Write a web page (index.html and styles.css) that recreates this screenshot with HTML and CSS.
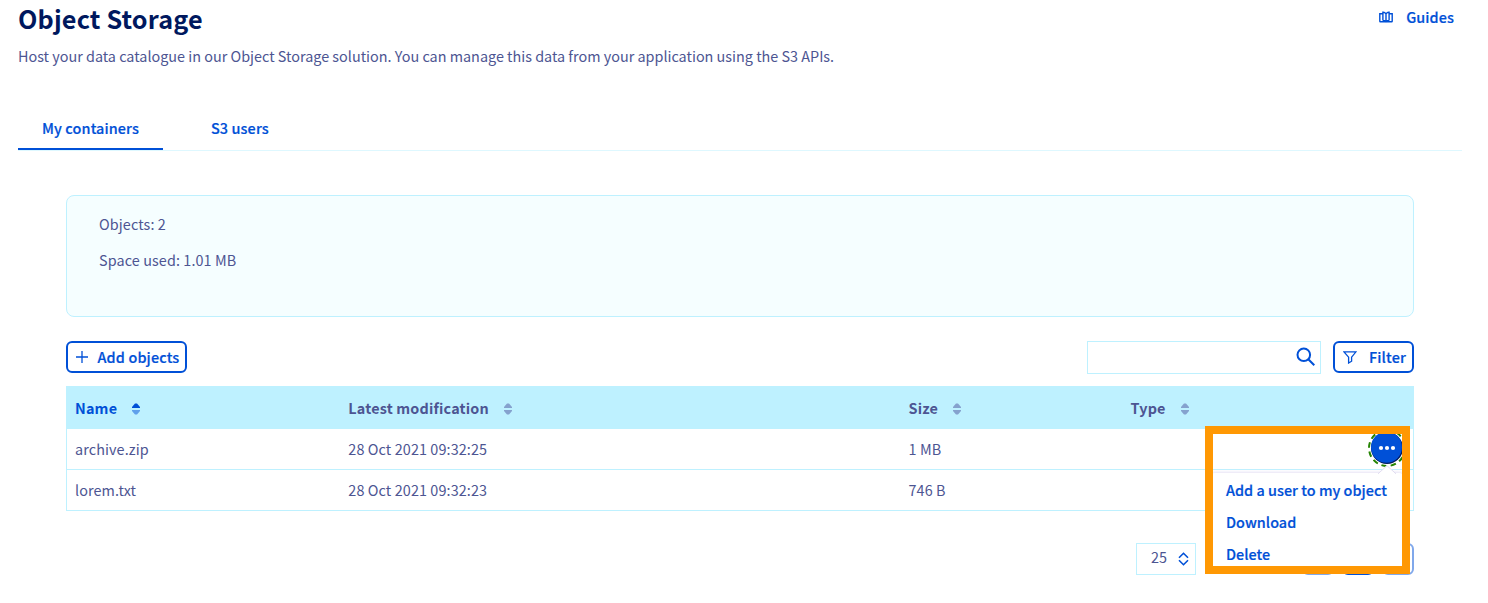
FILE: index.html
```html
<!DOCTYPE html>
<html lang="en">
<head>
<meta charset="utf-8">
<title>Object Storage</title>
<link rel="stylesheet" href="styles.css">
</head>
<body>
<main class="page">
  <header class="page-header">
    <h1 class="title">Object Storage</h1>
    <a class="guides">
      <svg width="14" height="12" viewBox="0 0 14 12" fill="none" stroke="currentColor" stroke-width="1.400"><path d="M3.500 2.700H.8v7.500q0 .5.500.5h11.400q.5 0 .5-.5V2.700h-2.700M3.900 9.500V1.200C5.500 1 6.300 1.800 7 3c.7-1.200 1.500-2 3.100-1.800v8.300M3.900 9.500q2 0 3.100 1.200 1.100-1.200 3.100-1.200M7 3v7.500"/></svg>
      <span>Guides</span>
    </a>
  </header>
  <p class="description">Host your data catalogue in our Object Storage solution. You can manage this data from your application using the S3 APIs.</p>
  <nav class="tabs">
    <a class="tab tab-active">My containers</a>
    <a class="tab">S3 users</a>
  </nav>
  <section class="content">
    <div class="summary">
      <p>Objects: 2</p>
      <p>Space used: 1.01 MB</p>
    </div>
    <div class="toolbar">
      <button class="btn btn-add">
        <svg width="12" height="12" viewBox="0 0 12 12" stroke="currentColor" stroke-width="1.300"><path d="M6 0v12M0 6h12"/></svg>
        <span>Add objects</span>
      </button>
      <div class="search">
        <svg width="20" height="20" viewBox="0 0 20 20" fill="none" stroke="currentColor" stroke-width="2"><circle cx="7.800" cy="7.800" r="6.300"/><path d="M12.300 12.300l6 6"/></svg>
      </div>
      <button class="btn btn-filter">
        <svg width="14" height="13" viewBox="0 0 14 13" fill="none" stroke="currentColor" stroke-width="1.300"><path d="M1 .8h12L8.600 6.200v4L5.600 12V6.200z"/></svg>
        <span>Filter</span>
      </button>
    </div>
    <div class="table">
      <div class="row head">
        <div class="cell sorted"><span>Name</span><svg class="sort" width="8" height="12" viewBox="0 0 8 12" fill="currentColor"><path d="M0 5V4l3-3.500h2L8 4v1z"/><path class="sort-down" d="M0 7v1l3 3.500h2L8 8V7z"/></svg></div>
        <div class="cell"><span>Latest modification</span><svg class="sort" width="8" height="12" viewBox="0 0 8 12" fill="currentColor"><path d="M0 5V4l3-3.500h2L8 4v1z"/><path d="M0 7v1l3 3.500h2L8 8V7z"/></svg></div>
        <div class="cell"><span>Size</span><svg class="sort" width="8" height="12" viewBox="0 0 8 12" fill="currentColor"><path d="M0 5V4l3-3.500h2L8 4v1z"/><path d="M0 7v1l3 3.500h2L8 8V7z"/></svg></div>
        <div class="cell"><span>Type</span><svg class="sort" width="8" height="12" viewBox="0 0 8 12" fill="currentColor"><path d="M0 5V4l3-3.500h2L8 4v1z"/><path d="M0 7v1l3 3.500h2L8 8V7z"/></svg></div>
      </div>
      <div class="row">
        <div class="cell">archive.zip</div><div class="cell">28 Oct 2021 09:32:25</div><div class="cell">1 MB</div><div class="cell"></div>
      </div>
      <div class="row">
        <div class="cell">lorem.txt</div><div class="cell">28 Oct 2021 09:32:23</div><div class="cell">746 B</div><div class="cell"></div>
      </div>
    </div>
    <div class="pagination">
      <div class="page-size"><span>25</span>
        <svg width="11" height="14" viewBox="0 0 11 14" fill="none" stroke="currentColor" stroke-width="1.600"><path d="M1 5.800L5.500 1.300 10 5.800M1 8.200l4.500 4.500L10 8.200"/></svg>
      </div>
      <div class="pager"><i class="page-btn"></i><i class="page-btn page-current"></i><i class="page-btn"></i></div>
    </div>
  </section>
</main>
<div class="highlight">
  <div class="row-line"></div>
  <svg class="actions" width="40" height="40" viewBox="0 0 40 40"><circle cx="20" cy="20" r="18" fill="#fff" stroke="#268403" stroke-width="2" stroke-dasharray="5.500 3.920"/><circle cx="20" cy="20" r="16" fill="#00185e"/><circle cx="19.500" cy="19.300" r="15.500" fill="#0050d7"/><g fill="#fff"><circle cx="14" cy="20" r="2.100"/><circle cx="20" cy="20" r="2.100"/><circle cx="26" cy="20" r="2.100"/></g></svg>
  <div class="menu">
    <svg class="menu-arrow" width="20" height="10" viewBox="0 0 20 10"><path d="M1 9L10 0l9 9v1H1z" fill="#fff"/><path d="M1 8.800L10 .7l9 8.100" fill="none" stroke="#e0dcf0"/></svg>
    <a>Add a user to my object</a>
    <a>Download</a>
    <a>Delete</a>
  </div>
</div>
</body>
</html>
```
FILE: styles.css
```css
* { box-sizing: border-box; }
body {
  margin: 0;
  height: 603px;
  overflow: hidden;
  position: relative;
  background: #fff;
  color: #4d5592;
  font-family: "Noto Sans CJK SC", "Noto Sans", sans-serif;
  font-size: 14.4px;
  line-height: 20px;
}
h1, p { margin: 0; }
.page { padding: 0 26px 0 18px; }
.page-header { display: flex; justify-content: space-between; height: 39px; }
.title { color: #00185e; font-size: 25.2px; line-height: 36px; font-weight: 700; letter-spacing: .17px; }
.guides { display: flex; align-items: center; gap: 13px; height: 34px; margin-right: 8px; color: #0050d7; font-weight: 500; letter-spacing: .1px; }
.guides, .tab, .btn, .menu { -webkit-text-stroke: .2px currentColor; }
.description { height: 34px; line-height: 34px; white-space: nowrap; }
.tabs { display: flex; gap: 24px; height: 45px; margin-top: 33px; border-bottom: 1px solid #def8ff; }
.tab { height: 44px; padding: 0 24px; line-height: 44px; color: #0050d7; font-weight: 500; letter-spacing: .12px; white-space: nowrap; }
.tab-active { width: 145px; border-bottom: 2px solid #0050d7; }
.content { padding: 44px 48px 0; }
.summary { height: 122px; padding: 18px 32px; border: 1px solid #bef1ff; border-radius: 8px; background: #f5feff; letter-spacing: .1px; }
.summary p { margin-bottom: 16px; }
.toolbar { display: flex; height: 33px; margin-top: 24px; }
.btn { display: flex; align-items: center; height: 32px; padding: 0 0 0 8px; border: 2px solid #0050d7; border-radius: 6px; background: #fff; color: #0050d7; font: inherit; font-weight: 500; letter-spacing: .15px; white-space: nowrap; }
.btn-add { width: 121px; gap: 9.5px; }
.btn-filter { width: 81px; gap: 12px; }
.search { display: flex; justify-content: flex-end; width: 234px; height: 33px; margin: 0 12px 0 auto; padding: 5px 4.500px 0 0; border: 1px solid #bef1ff; color: #0050d7; }
.table { height: 125px; margin-top: 12px; border: 1px solid #bef1ff; border-top: 0; letter-spacing: .1px; }
.row { display: grid; grid-template-columns: 273.3px 560.2px 222px 1fr; height: 41px; padding-left: 8px; line-height: 40px; border-bottom: 1px solid #bef1ff; }
.row:last-child { border-bottom: 0; }
.head { height: 43px; background: #bef1ff; line-height: 43px; font-weight: 700; letter-spacing: .17px; }
.head .cell { display: flex; align-items: center; gap: 15px; height: 43px; }
.sorted { color: #0050d7; }
.sort { margin-top: 3px; }
.head .cell:not(.sorted) .sort { color: #85a2ce; }
.sort-down { opacity: .5; }
.pagination { display: flex; justify-content: space-between; margin: 32px 0 0 1070px; }
.page-size { display: flex; align-items: center; gap: 11px; width: 60px; height: 32px; padding-left: 14px; border: 1px solid #bef1ff; }
.page-size span { margin-bottom: 4px; }
.page-size svg { color: #0050d7; }
.pager { display: flex; gap: 8px; }
.page-btn { width: 32px; height: 32px; border: 2px solid #80a8eb; border-radius: 6px; }
.page-current { border-color: #0050d7; background: #0050d7; }
.highlight { position: absolute; left: 1205px; top: 426px; width: 205px; height: 148px; border: 8px solid #ff9803; background: #fff; overflow: hidden; }
.row-line { height: 36px; border-bottom: 1px solid #bef1ff; }
.actions { position: absolute; left: 154px; top: -6px; }
.menu { position: absolute; left: -2px; top: 39px; width: 192px; height: 120px; padding: 1px 0 0 15px; border-radius: 4px; background: #fff; box-shadow: 0 -1px 3px #e6e2f5; color: #0050d7; font-weight: 500; letter-spacing: .03px; }
.menu a { display: block; height: 32px; line-height: 32px; white-space: nowrap; }
.menu-arrow { position: absolute; left: 166px; top: -8px; }
```
